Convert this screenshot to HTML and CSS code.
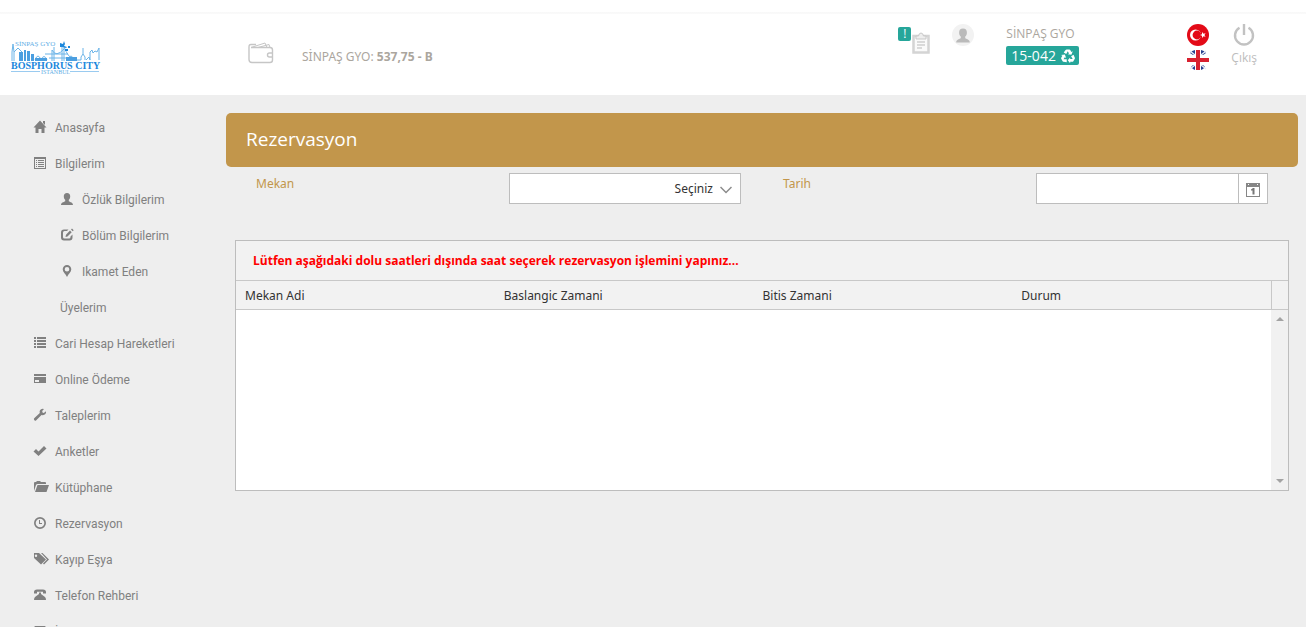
FILE: index.html
```html
<!DOCTYPE html>
<html lang="tr">
<head>
<meta charset="utf-8">
<meta name="viewport" content="width=device-width, initial-scale=1">
<title>Rezervasyon</title>
<link rel="stylesheet" href="styles.css">
</head>
<body>
<header class="topbar">
  <a class="brand" href="#" aria-label="Bosphorus City">
    <svg class="brand-art" viewBox="0 0 90 36">
      <g fill="none" stroke="#6bb4e8" stroke-width="1">
        <path d="M1 21V12L2 4L3 12V21M3 12L7 8L11 12M66 20H70V17L72 14L74 17V20M61 20L63 17L65 20M72 14V8M75 20L78 17L79 20M79 20V12L81 10L82 13L84 11L86 12L88 8V20"/>
        <path d="M41 10V21M43 7V21M51 6V21M53 6V21M34 14H57M41 10Q45 18 53 9M53 7Q57 17 62 19M38 18H57"/>
        <path d="M24 20Q27 12 30 20Q33 13 36 20M57 20Q60 12 63 20"/>
      </g>
      <g fill="#4b9fe0">
        <path d="M8 12h4v9H8zM13 10h2v11h-2zM16 11h3v10h-3zM20 14h3v7h-3zM24 18h12v3H24zM55 17h11v4H55z"/>
        <path fill="#1b87dc" d="M49 3l3 1 1-3 1 3-1 2 3 1-1 1-3-1-3 0zM54 9h3v2h-3zM57 6h2v2h-2z"/>
        <path fill="#9acbf0" d="M0 31h29v1H0zM59 31h29v1H59z"/>
      </g>
      <text class="logo-top" x="4" y="6">SİNPAŞ GYO</text>
      <text class="logo-name" x="0" y="29">BOSPHORUS CITY</text>
      <text class="logo-city" x="30" y="34">ISTANBUL</text>
    </svg>
  </a>
  <div class="balance">
    <svg class="wallet" viewBox="0 0 26 22" fill="none" stroke="#c6c6c6" stroke-width="1.4">
      <path d="M3 5.500H22Q24.500 5.500 24.500 8V18Q24.500 20.500 22 20.500H4Q1 20.500 1 17.500V5Q1 2.500 3 2.500H8M24 11H21.500Q19.500 11 19.500 13T21.500 15H24"/>
      <path d="M3 5.500L17 1L19 5.500M10 5.500L21 2.500L22 5.500" stroke-width="1"/>
    </svg>
    <span>SİNPAŞ GYO: <strong>537,75 - B</strong></span>
  </div>
  <div class="account">
    <a class="tasks" href="#" aria-label="Görevler">
      <span class="alert">!</span>
      <svg class="clipboard" viewBox="0 0 18 22">
        <path d="M1.500 4h15v16.500h-15z" fill="#fafafa" stroke="#d4d4d4" stroke-width="2.500"/>
        <path d="M4 7V4H6.500Q7 1 9 1T11.500 4H14V7Z" fill="#eee" stroke="#c9c9c9"/>
        <path d="M5 10h8M5 13h8M5 16h5" stroke="#b9b9b9"/>
      </svg>
    </a>
    <svg class="avatar" viewBox="0 0 22 22">
      <circle cx="11" cy="11" r="11" fill="#f2f2f2"/>
      <path d="M11 4.500c2.600 0 4 1.600 3.900 4.200 0 1.800-.7 3-1.700 3.900v1.600c2 1 4.600 1.400 4.600 4.200H4.200c0-2.800 2.600-3.200 4.600-4.200v-1.600C7.800 11.700 7.100 10.500 7.100 8.700 7 6.100 8.400 4.500 11 4.500z" fill="#bababa"/>
    </svg>
    <div class="unit">
      <span>SİNPAŞ GYO</span>
      <button class="unit-tag" type="button">15-042
        <svg class="recycle" viewBox="0 0 14 14">
          <g fill="#fff">
            <path id="arm" d="M4.600 1Q5 .5 5.600.5H8.400Q9 .5 9.400 1.200L10.400 3 11.800 2.200 10.400 5.800 6.700 5.200 8 4.400 6.800 2.200 5.200 5 2.700 3.600Z"/>
            <use href="#arm" transform="rotate(120 7 7.500)"/>
            <use href="#arm" transform="rotate(240 7 7.500)"/>
          </g>
        </svg>
      </button>
    </div>
    <div class="languages">
      <button type="button" aria-label="Türkçe">
        <svg viewBox="0 0 22 22"><circle cx="11" cy="11" r="11" fill="#e30a17"/><circle cx="8.500" cy="11" r="5.500" fill="#fff"/><circle cx="10" cy="11" r="4.400" fill="#e30a17"/><path d="M13 11l2-.8.1-2.100 1.400 1.700 2.100-.6-1.200 1.800 1.200 1.800-2.100-.6-1.400 1.700-.1-2.100z" fill="#fff"/></svg>
      </button>
      <button type="button" aria-label="English">
        <svg viewBox="0 0 22 22"><path d="M8 1V6H6L3 4Q5 1.500 8 1zM14 1V6H16L19 4Q17 1.500 14 1zM8 21V16H6L4 18Q6 20.500 8 21zM14 21V16H16L18 18Q16 20.500 14 21z" fill="#26408f"/><path d="M3 2L8 6M19 2L14 6M3 20L8 16M19 20L14 16" stroke="#e8ecf6" stroke-width="1.500"/><path d="M9 1h4v8h9v4h-9v8H9v-8H0V9h9z" fill="#d8202f"/></svg>
      </button>
    </div>
    <a class="logout" href="#">
      <svg viewBox="0 0 22 22" fill="none" stroke="#c2c2c2" stroke-width="2.400"><path d="M6.500 3.700A9 9 0 1 0 15.500 3.700M11 0V11"/></svg>
      <span>Çıkış</span>
    </a>
  </div>
</header>

<div class="layout">
  <nav class="sidebar">
    <ul class="menu">
      <li><a href="#"><svg viewBox="0 0 14 14"><path d="M7 .5L13.500 7.500H11.500V13H8.500V9H5.500V13H2.500V7.500H.5L7 .5zM10 1h2v4l-2-2z"/></svg>Anasayfa</a></li>
      <li><a href="#"><svg viewBox="0 0 14 14"><path fill-rule="evenodd" d="M1 1H13V13H1zM2 3V12H12V3zM3 4H4V5H3zM5 4H11V5H5zM3 6H4V7H3zM5 6H11V7H5zM3 8H4V9H3zM5 8H11V9H5zM3 10H4V11H3zM5 10H11V11H5z"/></svg>Bilgilerim</a>
        <ul class="submenu">
          <li><a href="#"><svg viewBox="0 0 14 14"><path d="M7 1c2.100 0 3.300 1.400 3.200 3.500 0 1.400-.6 2.600-1.400 3.300v1.400c1.700.9 4.200 1.500 4.200 3.800H1c0-2.300 2.500-2.900 4.200-3.800V7.800C4.400 7.100 3.800 5.900 3.800 4.500 3.700 2.400 4.900 1 7 1z"/></svg>Özlük Bilgilerim</a></li>
          <li><a href="#"><svg viewBox="0 0 14 14"><path d="M8.500 1.500L7 3H4.500Q3 3 3 4.500V9Q3 10.500 4.500 10.500H9Q10.500 10.500 10.500 9V8.500L12.500 6.500V9.500Q12.500 12.500 9.500 12.500H4Q1 12.500 1 9.500V4.500Q1 1.500 4 1.500zM10 2.500L11.700 4.200 7.500 8.500 5.500 9 6 6.800zM11 1.500L12 .5 13.700 2.200 12.700 3.200z"/></svg>Bölüm Bilgilerim</a></li>
          <li><a href="#"><svg viewBox="0 0 14 14"><path fill-rule="evenodd" d="M7 1a4.300 4.300 0 0 1 4.300 4.300C11.300 8 8.500 10 7 13 5.500 10 2.700 8 2.700 5.300A4.300 4.300 0 0 1 7 1zM7 3A2.300 2.300 0 1 0 7 7.600 2.300 2.300 0 1 0 7 3z"/></svg>Ikamet Eden</a></li>
          <li><a href="#">Üyelerim</a></li>
        </ul>
      </li>
      <li><a href="#"><svg viewBox="0 0 14 14"><path d="M1 1h2v2H1zM4 1h9v2H4zM1 4h2v2H1zM4 4h9v2H4zM1 7h2v2H1zM4 7h9v2H4zM1 10h2v2H1zM4 10h9v2H4z"/></svg>Cari Hesap Hareketleri</a></li>
      <li><a href="#"><svg viewBox="0 0 14 14"><path fill-rule="evenodd" d="M1 2h12v2H1zM1 5h12v6H1zM2 8v2h4V8z"/></svg>Online Ödeme</a></li>
      <li><a href="#"><svg viewBox="0 0 14 14"><path d="M13 3.200L10.800 5 9.500 4.500 9.200 3 11 1Q8.200.2 7 2.300 6.300 3.500 6.800 5L1.200 10.300Q.5 11 1.200 12T3 12.400L8.500 7Q11 7.600 12.400 6 13.300 4.800 13 3.200z"/></svg>Taleplerim</a></li>
      <li><a href="#"><svg viewBox="0 0 14 14"><path d="M.5 7.500L3 5 5.500 7.500 11 2 13.500 4.500 5.500 12z"/></svg>Anketler</a></li>
      <li><a href="#"><svg class="wide" viewBox="0 0 16 14"><path d="M1 11V3Q1 2 2 2H3L4 1H7L8 2H12Q13 2 13 3V4H4.500Q3.500 4 3 5L1 11zM4.500 5H16L13.500 12H2z"/></svg>Kütüphane</a></li>
      <li><a href="#"><svg viewBox="0 0 14 14"><path fill-rule="evenodd" d="M7 1A6 6 0 1 1 7 13 6 6 0 1 1 7 1zM7 2.700A4.300 4.300 0 1 0 7 11.300 4.300 4.300 0 1 0 7 2.700zM6 4H7V7H9V8H6z"/></svg>Rezervasyon</a></li>
      <li><a href="#"><svg class="wide" viewBox="0 0 16 14"><path fill-rule="evenodd" d="M1 1H6L13 7.500 8 12.500 1 6zM3 2.500A1.200 1.200 0 1 0 3 4.900 1.200 1.200 0 1 0 3 2.500zM8 1H9.500L16 7.500 11 12.500 10 11.500 14 7.500z"/></svg>Kayıp Eşya</a></li>
      <li><a href="#"><svg viewBox="0 0 14 14"><path d="M1 4Q1 1.500 4 1.500H10Q13 1.500 13 4V5.500H10V3.800H4V5.500H1zM6 4.500H8V6L12 9Q13 10 13 12H1Q1 10 2 9L6 6z"/></svg>Telefon Rehberi</a></li>
      <li><a href="#"><svg viewBox="0 0 14 14"><path d="M1 2h12L7 7zM1 4l6 5 6-5v8H1z"/></svg>İ</a></li>
    </ul>
  </nav>

  <main class="content">
    <h1 class="page-title">Rezervasyon</h1>
    <form class="filters">
      <div class="field">
        <label for="venue">Mekan</label>
        <div class="control">
          <select id="venue"><option>Seçiniz</option></select>
          <svg class="chevron" viewBox="0 0 12 8" fill="none" stroke="#8c8c8c" stroke-width="1.500"><path d="M.5 1L6 6.500 11.500 1"/></svg>
        </div>
      </div>
      <div class="field">
        <label for="date">Tarih</label>
        <div class="control">
          <input id="date" type="text">
          <button class="picker" type="button" aria-label="Takvim">
            <svg viewBox="0 0 14 14"><path fill-rule="evenodd" fill="#868686" d="M0 0H14V14H0zM1 4V13H13V4zM2 1V2H3V1zM11 1V2H12V1z"/><path d="M5 6.500L7 5H8.500V11.500H6.500V7.500H5z" fill="#777"/></svg>
          </button>
        </div>
      </div>
    </form>
    <section class="grid">
      <p class="notice">Lütfen aşağıdaki dolu saatleri dışında saat seçerek rezervasyon işlemini yapınız...</p>
      <table class="slots">
        <thead>
          <tr><th>Mekan Adi</th><th>Baslangic Zamani</th><th>Bitis Zamani</th><th>Durum</th><th class="gutter"></th></tr>
        </thead>
        <tbody>
          <tr><td colspan="4"></td><td class="scroll"><div class="track"><span class="arrow up"></span><span class="arrow down"></span></div></td></tr>
        </tbody>
      </table>
    </section>
  </main>
</div>
</body>
</html>
```
FILE: styles.css
```css
* { box-sizing: border-box; }
html { height: 100%; overflow: hidden; }
body {
  margin: 0;
  min-height: 100%;
  background: #eee;
  font-family: "Open Sans", "Noto Sans", sans-serif;
  font-size: 12px;
  color: #333;
}
a { color: inherit; text-decoration: none; }
ul { list-style: none; margin: 0; padding: 0; }
button { border: 0; padding: 0; background: none; font: inherit; color: inherit; cursor: pointer; }
svg { display: block; flex: none; }

.topbar {
  display: flex;
  align-items: flex-start;
  height: 95px;
  padding-right: 49px;
  background: linear-gradient(#fff 12px, #f8f8f8 12px, #fafafa 14px, #fff 14px);
  color: #aba69e;
}
.brand { width: 248px; padding: 40px 0 0 11px; }
.brand-art { width: 90px; height: 36px; }
.brand-art text { font-family: "Liberation Serif", serif; fill: #1b87dc; }
.brand-art .logo-top { font-size: 7px; fill: #63aee6; }
.brand-art .logo-name { font-size: 10px; font-weight: bold; }
.brand-art .logo-city { font-size: 6px; fill: #63aee6; }

.balance { display: flex; align-items: center; gap: 28px; padding-top: 41px; font-family: "Noto Sans", sans-serif; line-height: 17px; }
.balance span { padding-top: 7px; }
.wallet { width: 26px; height: 22px; }

.account { display: flex; align-items: flex-start; margin-left: auto; padding-top: 24px; }
.tasks { display: flex; width: 54px; gap: 1px; }
.alert {
  width: 13px;
  height: 14px;
  margin-top: 3px;
  border-radius: 2px;
  background: #26a69a;
  color: #fff;
  font-size: 12px;
  line-height: 14px;
  text-align: center;
}
.clipboard { width: 18px; height: 22px; margin-top: 8px; }
.avatar { width: 22px; height: 22px; }
.unit { display: flex; flex-direction: column; gap: 2px; width: 213px; padding-left: 32px; line-height: 20px; }
.unit-tag {
  display: flex;
  align-items: center;
  align-self: flex-start;
  gap: 5px;
  height: 19px;
  padding: 0 4px 0 5px;
  border-radius: 2px;
  background: #26a69a;
  color: #fff;
  font-size: 14px;
}
.recycle { width: 14px; height: 14px; }
.languages { display: grid; gap: 3px; width: 44px; justify-items: start; }
.languages svg { width: 22px; height: 22px; }
.logout { display: grid; justify-items: center; gap: 3px; color: #bdbdbd; line-height: 18px; }
.logout svg { width: 22px; height: 22px; }

.layout { display: flex; align-items: flex-start; padding: 0 8px 0 0; }
.sidebar { flex: none; width: 226px; padding: 15px 0 0 33px; font-family: Roboto, sans-serif; font-size: 12px; color: #808080; }
.menu a { display: flex; align-items: center; gap: 8px; height: 36px; }
.menu svg { width: 14px; height: 14px; margin-top: -3px; fill: #808080; }
.menu .wide { width: 16px; margin-right: -2px; }
.submenu { padding-left: 27px; }

.content { flex: 1; min-width: 0; padding-top: 18px; font-family: "Noto Sans", sans-serif; }
.page-title {
  margin: 0;
  padding: 12px 20px 14px;
  border-radius: 5px;
  background: #c2964b;
  color: #fff;
  font-family: "Open Sans", sans-serif;
  font-size: 19px;
  font-weight: 400;
  line-height: 28px;
}
.filters { display: grid; grid-template-columns: 1fr 1fr; padding: 6px 9px 36px; }
.field { display: grid; grid-template-columns: 12fr 11fr; align-items: start; padding: 0 21px; }
.field label { color: #c2964b; line-height: 21px; }
.control { display: flex; position: relative; height: 31px; border: 1px solid #bdbdbd; background: #fff; }
.control select, .control input {
  flex: 1;
  min-width: 0;
  border: 0;
  outline: 0;
  background: transparent;
  color: #333;
  font: inherit;
}
.control select { appearance: none; padding: 0 27px 0 8px; text-align-last: right; }
.chevron { position: absolute; right: 8px; top: 12px; width: 12px; height: 8px; pointer-events: none; }
.picker { display: grid; place-items: center; width: 29px; border-left: 1px solid #bdbdbd; }
.picker svg { width: 14px; height: 14px; margin-top: 3px; }

.grid { margin: 0 9px; border: 1px solid #bdbdbd; background: #f2f2f2; }
.notice { margin: 0; padding: 10px 17px; border-bottom: 1px solid #c8c8c8; color: #f00; font-family: "Open Sans", sans-serif; font-weight: 700; line-height: 19px; }
.slots { width: 100%; table-layout: fixed; border-spacing: 0; }
.slots th { height: 29px; padding: 1px 9px 0; border-bottom: 1px solid #c8c8c8; font-weight: 400; text-align: left; }
.slots .gutter { width: 17px; padding: 0; border-left: 1px solid #c8c8c8; }
.slots td { height: 180px; padding: 0; background: #fff; }
.slots .scroll { background: #f1f1f1; }
.track { display: flex; flex-direction: column; justify-content: space-between; align-items: center; height: 180px; padding: 7px 0; }
.arrow { border: 4px solid transparent; }
.up { border-top: 0; border-bottom-color: #a3a3a3; }
.down { border-bottom: 0; border-top-color: #a3a3a3; }
```
